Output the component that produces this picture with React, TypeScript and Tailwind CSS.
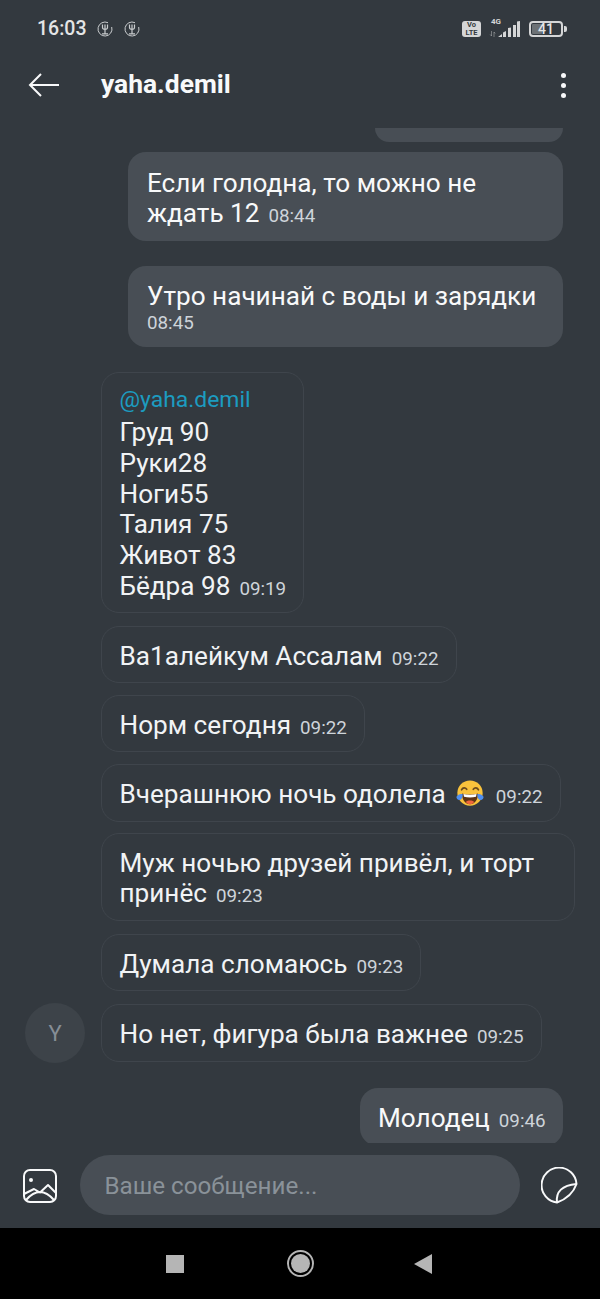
type Msg = { text: string; time: string; top: string; avatar?: boolean; emoji?: boolean }

const incoming: Msg[] = [
  { text: "Ва1алейкум Ассалам", time: "09:22", top: "mt-[13px]" },
  { text: "Норм сегодня", time: "09:22", top: "mt-[11.5px]" },
  { text: "Вчерашнюю ночь одолела", time: "09:22", top: "mt-3", emoji: true },
  { text: "Муж ночью друзей привёл, и торт принёс", time: "09:23", top: "mt-[10.5px]" },
  { text: "Думала сломаюсь", time: "09:23", top: "mt-[12.5px]" },
  { text: "Но нет, фигура была важнее", time: "09:25", top: "mt-3", avatar: true },
]

const sizes = ["Груд 90", "Руки28", "Ноги55", "Талия 75", "Живот 83"]

function Time({ value, block }: { value: string; block?: boolean }) {
  return <span className={`text-[18.8px] text-[#ced4da] ${block ? "block leading-[22px]" : "ml-[9px] leading-none"}`}>{value}</span>
}

function ForkIcon() {
  return (
    <svg viewBox="0 0 16 16" className="h-4 w-4 text-[#c9ccce]" fill="none" stroke="currentColor">
      <path d="M11 1.700A7 7 0 1 0 14.700 6" strokeWidth="1" />
      <path d="M5.500 3.500v3c0 1.200 1 1.800 2.500 1.800s2.500-.6 2.500-1.800v-3M8 3.500v9M5 12.800h6" strokeWidth="1.200" />
    </svg>
  )
}

function LaughEmoji() {
  return (
    <svg viewBox="0 0 32 32" className="ml-[9px] mr-[2px] inline-block h-[30px] w-[30px] align-[-6px]">
      <circle cx="16" cy="15" r="13.500" fill="#f9c23c" />
      <path d="M7 11.500c1.500-2.500 4-2.500 5.500-.5M19.500 11c1.500-2 4-2 5.500.5" stroke="#6b4a1d" strokeWidth="1.800" fill="none" strokeLinecap="round" />
      <path d="M7.500 15.500c5 1.500 12 1.500 17 0 0 7-3.500 11.500-8.500 11.500s-8.500-4.500-8.500-11.500z" fill="#5d3415" />
      <path d="M9 16c4.500 1 9.500 1 14 0l-.6 3c-4 .8-8.800.8-12.800 0z" fill="#fff" />
      <path d="M11.500 24.500c2.500-2 6.500-2 9 0-1.300 1.600-2.800 2.500-4.500 2.500s-3.200-.9-4.500-2.500z" fill="#f0663c" />
      <path d="M1.500 19c1.500-2.500 4-3.500 6.500-3 .5 2.500-.5 6-3 6.500-2 .3-3.500-1.500-3.500-3.500zM30.500 19c-1.500-2.500-4-3.500-6.500-3-.5 2.500.5 6 3 6.500 2 .3 3.500-1.500 3.500-3.500z" fill="#4f8ff0" />
    </svg>
  )
}

function Bubble({ msg }: { msg: Msg }) {
  return (
    <div className={`flex items-center ${msg.top} ${msg.avatar ? "pl-[25px]" : "pl-[101px]"}`}>
      {msg.avatar && (
        <div className="mr-4 flex h-[60px] w-[60px] shrink-0 items-center justify-center rounded-full bg-[#3d4349] text-[22px] text-[#868e96]">
          Y
        </div>
      )}
      <div className="max-w-[474px] rounded-[18px] border border-[#3f454c] pb-[11px] pl-[17.5px] pr-[17px] pt-[14px] text-[26.15px] leading-[30.7px] text-[#f1f3f5]">
        {msg.text}
        {msg.emoji && <LaughEmoji />}
        <Time value={msg.time} />
      </div>
    </div>
  )
}

export default function App() {
  return (
    <div className="flex h-[1299px] w-[600px] flex-col overflow-hidden bg-[#33393f] font-['Roboto',sans-serif]">
      <header className="h-[128px] shrink-0">
        <div className="flex h-[56px] items-center pl-[37px] pr-[33px] pt-[1px]">
          <span className="text-[19.5px] font-medium text-[#e4e5e6]">16:03</span>
          <div className="ml-[11px] flex gap-[11px]">
            <ForkIcon />
            <ForkIcon />
          </div>
          <div className="ml-auto flex items-center">
            <div className="flex h-4 w-[19px] flex-col items-center justify-center rounded-[3px] bg-[#d5d6d7] text-[7.5px] font-bold leading-[7.5px] text-[#343a40]">
              <span>Vo</span>
              <span>LTE</span>
            </div>
            <div className="relative ml-2 h-[18px] w-8">
              <svg viewBox="0 0 32 18" className="h-[18px] w-8 text-[#d5d6d7]" fill="currentColor">
                <path d="M9 17l4-3v3zM14 17v-4.500l3-1.500v6zM19 17V8l3-.5V17zM24 17V5h3v12zM28 17V1.500L31 1v16z" />
                <path d="M2.500 11v5M1.200 14.500l1.300 1.500M5 17v-5M6.200 13.500L5 12" stroke="currentColor" strokeWidth=".7" fill="none" opacity=".6" />
              </svg>
              <span className="absolute -top-[3px] left-[2px] text-[8px] font-bold leading-[9px] text-[#d5d6d7]">4G</span>
            </div>
            <div className="relative ml-2 flex h-4 w-[34px] items-center justify-center rounded-[4px] border-2 border-[#d5d6d7] text-[14px] font-medium leading-none text-[#e4e5e6]">
              <div className="absolute bottom-[1px] left-[1px] top-[1px] w-[10px] rounded-[1px] bg-[#6c7175]" />
              <span className="relative">41</span>
            </div>
            <div className="ml-[1px] h-[6px] w-[3px] rounded-r-[2px] bg-[#d5d6d7]" />
          </div>
        </div>
        <div className="flex h-[58px] items-center pl-[28px] pr-[34px]">
          <svg viewBox="0 0 31 26" className="h-[26px] w-[31px]" fill="none" stroke="#f8f9fa" strokeWidth="2">
            <path d="M31 13H2M13 2L2 13l11 11" />
          </svg>
          <h1 className="ml-[42px] text-[26.4px] font-bold text-[#f8f9fa]">yaha.demil</h1>
          <div className="ml-auto flex flex-col gap-[5px]">
            <span className="h-[5px] w-[5px] rounded-full bg-[#f8f9fa]" />
            <span className="h-[5px] w-[5px] rounded-full bg-[#f8f9fa]" />
            <span className="h-[5px] w-[5px] rounded-full bg-[#f8f9fa]" />
          </div>
        </div>
      </header>

      <main className="min-h-0 flex-1 overflow-hidden">
        <div className="ml-[375px] h-[14px] w-[188px] rounded-b-[18px] bg-[#484e55]" />

        <div className="ml-[128px] mt-2.5 w-[435px] rounded-[18px] bg-[#484e55] px-[19px] pb-[12.5px] pt-[15.5px] text-[26.15px] leading-[30.7px] text-[#f8f9fa]">
          Если голодна, то можно не ждать 12
          <Time value="08:44" />
        </div>
        <div className="ml-[128px] mt-[25px] w-[435px] rounded-[18px] bg-[#484e55] pb-[12.5px] pl-[19px] pr-[10px] pt-[15px] text-[26.15px] leading-[30.7px] text-[#f8f9fa]">
          Утро начинай с воды и зарядки
          <Time value="08:45" block />
        </div>

        <div className="ml-[101px] mt-[25px] w-[203px] rounded-[18px] border border-[#3f454c] pb-[10px] pl-[17.5px] pr-[10px] pt-[12px] text-[26.15px] leading-[30.7px] text-[#f1f3f5]">
          <div className="mb-[2px] text-[22.9px] text-[#1c9cc0]">@yaha.demil</div>
          {sizes.map((line) => (
            <div key={line}>{line}</div>
          ))}
          <div className="whitespace-nowrap">
            Бёдра 98
            <Time value="09:19" />
          </div>
        </div>

        {incoming.map((msg) => (
          <Bubble key={msg.text} msg={msg} />
        ))}

        <div className="ml-[360px] mt-[25px] w-[203px] whitespace-nowrap rounded-[18px] bg-[#484e55] px-[18px] pb-[12px] pt-[15px] text-[26.15px] leading-[30.7px] text-[#f8f9fa]">
          Молодец
          <Time value="09:46" />
        </div>
      </main>

      <footer className="flex h-[85px] shrink-0 items-center pl-[23px] pr-[22px]">
        <svg viewBox="0 0 34 34" className="h-[34px] w-[34px] shrink-0" fill="none" stroke="#f8f9fa" strokeWidth="2">
          <rect x="1" y="1" width="32" height="32" rx="6" />
          <circle cx="8" cy="11" r="2" fill="#f8f9fa" stroke="none" />
          <path d="M1 25l10-5 6 3.500L25 16l8 8M3 31Q17 15 31 31" strokeLinejoin="round" />
        </svg>
        <div className="mb-[1px] ml-[23px] flex h-[60px] w-[440px] items-center rounded-full bg-[#484e55] pl-[24.5px] pt-[3px] text-[24.2px] text-[#8a9299]">
          Ваше сообщение...
        </div>
        <svg viewBox="0 0 37 37" className="ml-auto h-[37px] w-[37px] shrink-0" fill="none" stroke="#f8f9fa" strokeWidth="2">
          <path d="M35.500 17A17.500 17.500 0 1 0 16 35.500Q31 30 35.500 17z" strokeLinejoin="round" />
          <path d="M16 35.500Q14 19 35.500 17" />
        </svg>
      </footer>

      <nav className="flex h-[71px] shrink-0 items-center bg-black">
        <div className="ml-[166px] h-[18px] w-[18px] bg-[#b5b5b5]" />
        <div className="ml-[103px] flex h-[27px] w-[27px] items-center justify-center rounded-full border-2 border-[#b5b5b5]">
          <div className="h-[19px] w-[19px] rounded-full bg-[#b5b5b5]" />
        </div>
        <svg viewBox="0 0 18 20" className="ml-[100px] h-[20px] w-[18px]">
          <path d="M18 0v20L0 10z" fill="#b5b5b5" />
        </svg>
      </nav>
    </div>
  )
}
